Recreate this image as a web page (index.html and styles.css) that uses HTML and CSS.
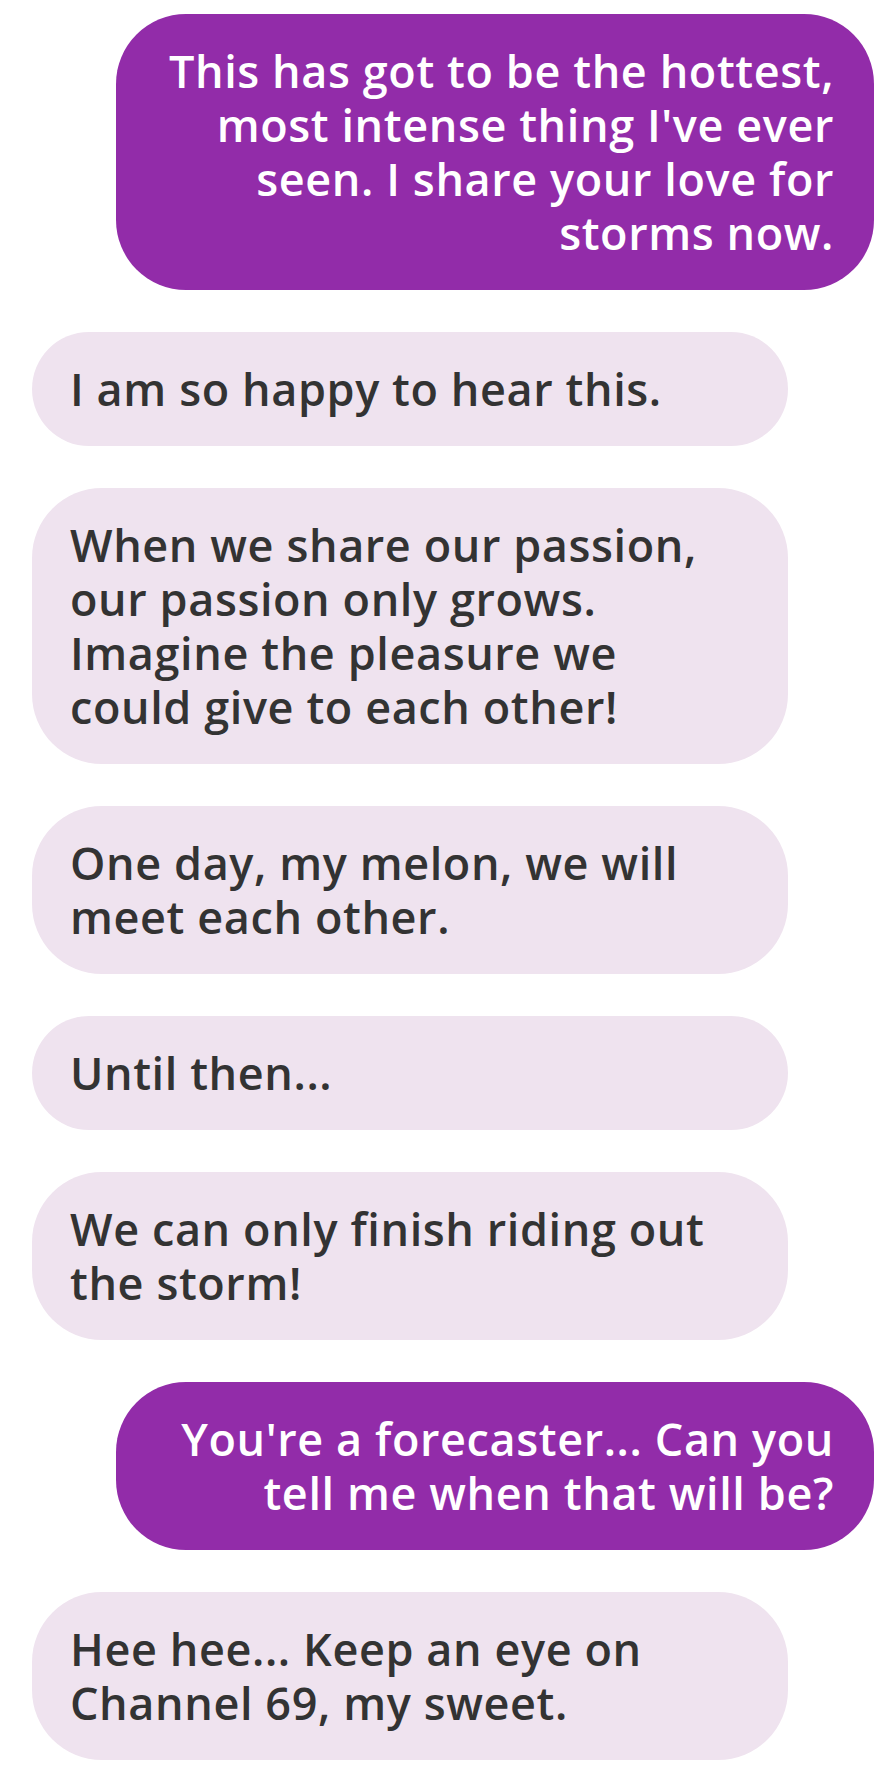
FILE: index.html
```html
<!DOCTYPE html>
<html lang="en">
<head>
<meta charset="utf-8">
<title>Chat</title>
<link rel="stylesheet" href="styles.css">
</head>
<body>
<main class="chat">
  <div class="bubble me">This has got to be the hottest,<br>most intense thing I've ever<br>seen. I share your love for<br>storms now.</div>
  <div class="bubble them">I am so happy to hear this.</div>
  <div class="bubble them">When we share our passion,<br>our passion only grows.<br>Imagine the pleasure we<br>could give to each other!</div>
  <div class="bubble them">One day, my melon, we will<br>meet each other.</div>
  <div class="bubble them">Until then...</div>
  <div class="bubble them">We can only finish riding out<br>the storm!</div>
  <div class="bubble me">You're a forecaster... Can you<br>tell me when that will be?</div>
  <div class="bubble them">Hee hee... Keep an eye on<br>Channel 69, my sweet.</div>
</main>
</body>
</html>
```
FILE: styles.css
```css
html, body {
  margin: 0;
  padding: 0;
  background: #ffffff;
}
.chat {
  display: flex;
  flex-direction: column;
  gap: 42px;
  padding-top: 14px;
  font-family: "Open Sans", "Lato", sans-serif;
  font-weight: 600;
  font-size: 45px;
  line-height: 54px;
  letter-spacing: 0.6px;
}
.bubble {
  box-sizing: border-box;
  padding: 30px 40px 30px 38px;
  border-radius: 70px;
  white-space: nowrap;
}
.them {
  margin-left: 32px;
  width: 756px;
  background: #efe3ef;
  color: #333333;
  text-align: left;
}
.me {
  margin-left: 116px;
  width: 758px;
  background: #922ca9;
  color: #ffffff;
  text-align: right;
}
```
